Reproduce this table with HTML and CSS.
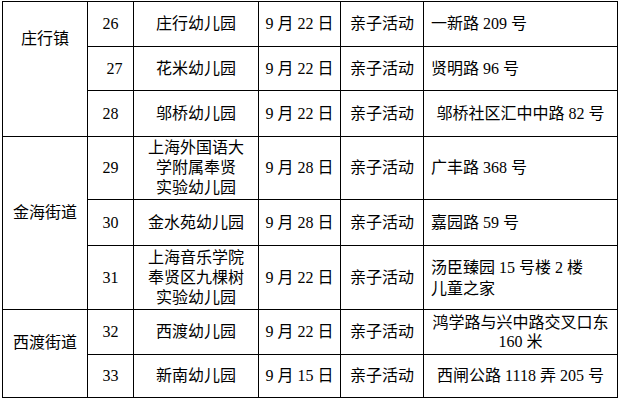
FILE: index.html
```html
<!DOCTYPE html>
<html lang="zh-CN">
<head>
<meta charset="utf-8">
<title>幼儿园亲子活动</title>
<link rel="stylesheet" href="styles.css">
</head>
<body>
<table class="schedule">
  <colgroup>
    <col class="c-town"><col class="c-no"><col class="c-name"><col class="c-date"><col class="c-act"><col class="c-addr">
  </colgroup>
  <tbody>
    <tr class="r45">
      <td rowspan="3" class="town town-first">庄行镇</td>
      <td>26</td>
      <td>庄行幼儿园</td>
      <td>9 月 22 日</td>
      <td>亲子活动</td>
      <td class="left">一新路 209 号</td>
    </tr>
    <tr class="r44">
      <td class="indent">27</td>
      <td>花米幼儿园</td>
      <td>9 月 22 日</td>
      <td>亲子活动</td>
      <td class="left">贤明路 96 号</td>
    </tr>
    <tr class="r46">
      <td>28</td>
      <td>邬桥幼儿园</td>
      <td>9 月 22 日</td>
      <td>亲子活动</td>
      <td>邬桥社区汇中中路 82 号</td>
    </tr>
    <tr class="r63">
      <td rowspan="3" class="town town-mid">金海街道</td>
      <td>29</td>
      <td class="multi">上海外国语大<br>学附属奉贤<br>实验幼儿园</td>
      <td>9 月 28 日</td>
      <td>亲子活动</td>
      <td class="left">广丰路 368 号</td>
    </tr>
    <tr class="r46">
      <td>30</td>
      <td>金水苑幼儿园</td>
      <td>9 月 28 日</td>
      <td>亲子活动</td>
      <td class="left">嘉园路 59 号</td>
    </tr>
    <tr class="r64">
      <td>31</td>
      <td class="multi">上海音乐学院<br>奉贤区九棵树<br>实验幼儿园</td>
      <td>9 月 22 日</td>
      <td>亲子活动</td>
      <td class="left multi2">汤臣臻园 15 号楼 2 楼<br>儿童之家</td>
    </tr>
    <tr class="r45">
      <td rowspan="2" class="town town-mid">西渡街道</td>
      <td>32</td>
      <td>西渡幼儿园</td>
      <td>9 月 22 日</td>
      <td>亲子活动</td>
      <td class="multi3">鸿学路与兴中路交叉口东<br>160 米</td>
    </tr>
    <tr class="r43">
      <td>33</td>
      <td>新南幼儿园</td>
      <td>9 月 15 日</td>
      <td>亲子活动</td>
      <td>西闸公路 1118 弄 205 号</td>
    </tr>
  </tbody>
</table>
</body>
</html>
```

FILE: styles.css
```css
html, body {
  margin: 0;
  padding: 0;
  background: #ffffff;
}

.schedule {
  margin: 1px 0 0 2px;
  border-collapse: collapse;
  table-layout: fixed;
  width: 615px;
  font-family: "Liberation Serif", "Noto Sans CJK SC", sans-serif;
  font-size: 16px;
  line-height: 20px;
  color: #000000;
}

.c-town { width: 85px; }
.c-no { width: 46px; }
.c-name { width: 125px; }
.c-date { width: 82px; }
.c-act { width: 83px; }
.c-addr { width: 194px; }

.schedule td {
  border: 1px solid #000000;
  padding: 0 6px;
  text-align: center;
  vertical-align: middle;
  white-space: nowrap;
}

.schedule td.left {
  text-align: left;
  padding-left: 7px;
}

.schedule td.indent {
  padding-left: 14px;
}

.schedule td.town-first {
  padding-bottom: 60px;
}

.schedule td.town-mid {
  padding-bottom: 21px;
}

.schedule td.multi2 {
  line-height: 21px;
}

.schedule td.multi3 {
  line-height: 19px;
  padding: 0 4px;
}

.r43 { height: 43px; }
.r44 { height: 44px; }
.r45 { height: 45px; }
.r46 { height: 46px; }
.r63 { height: 63px; }
.r64 { height: 64px; }
```
